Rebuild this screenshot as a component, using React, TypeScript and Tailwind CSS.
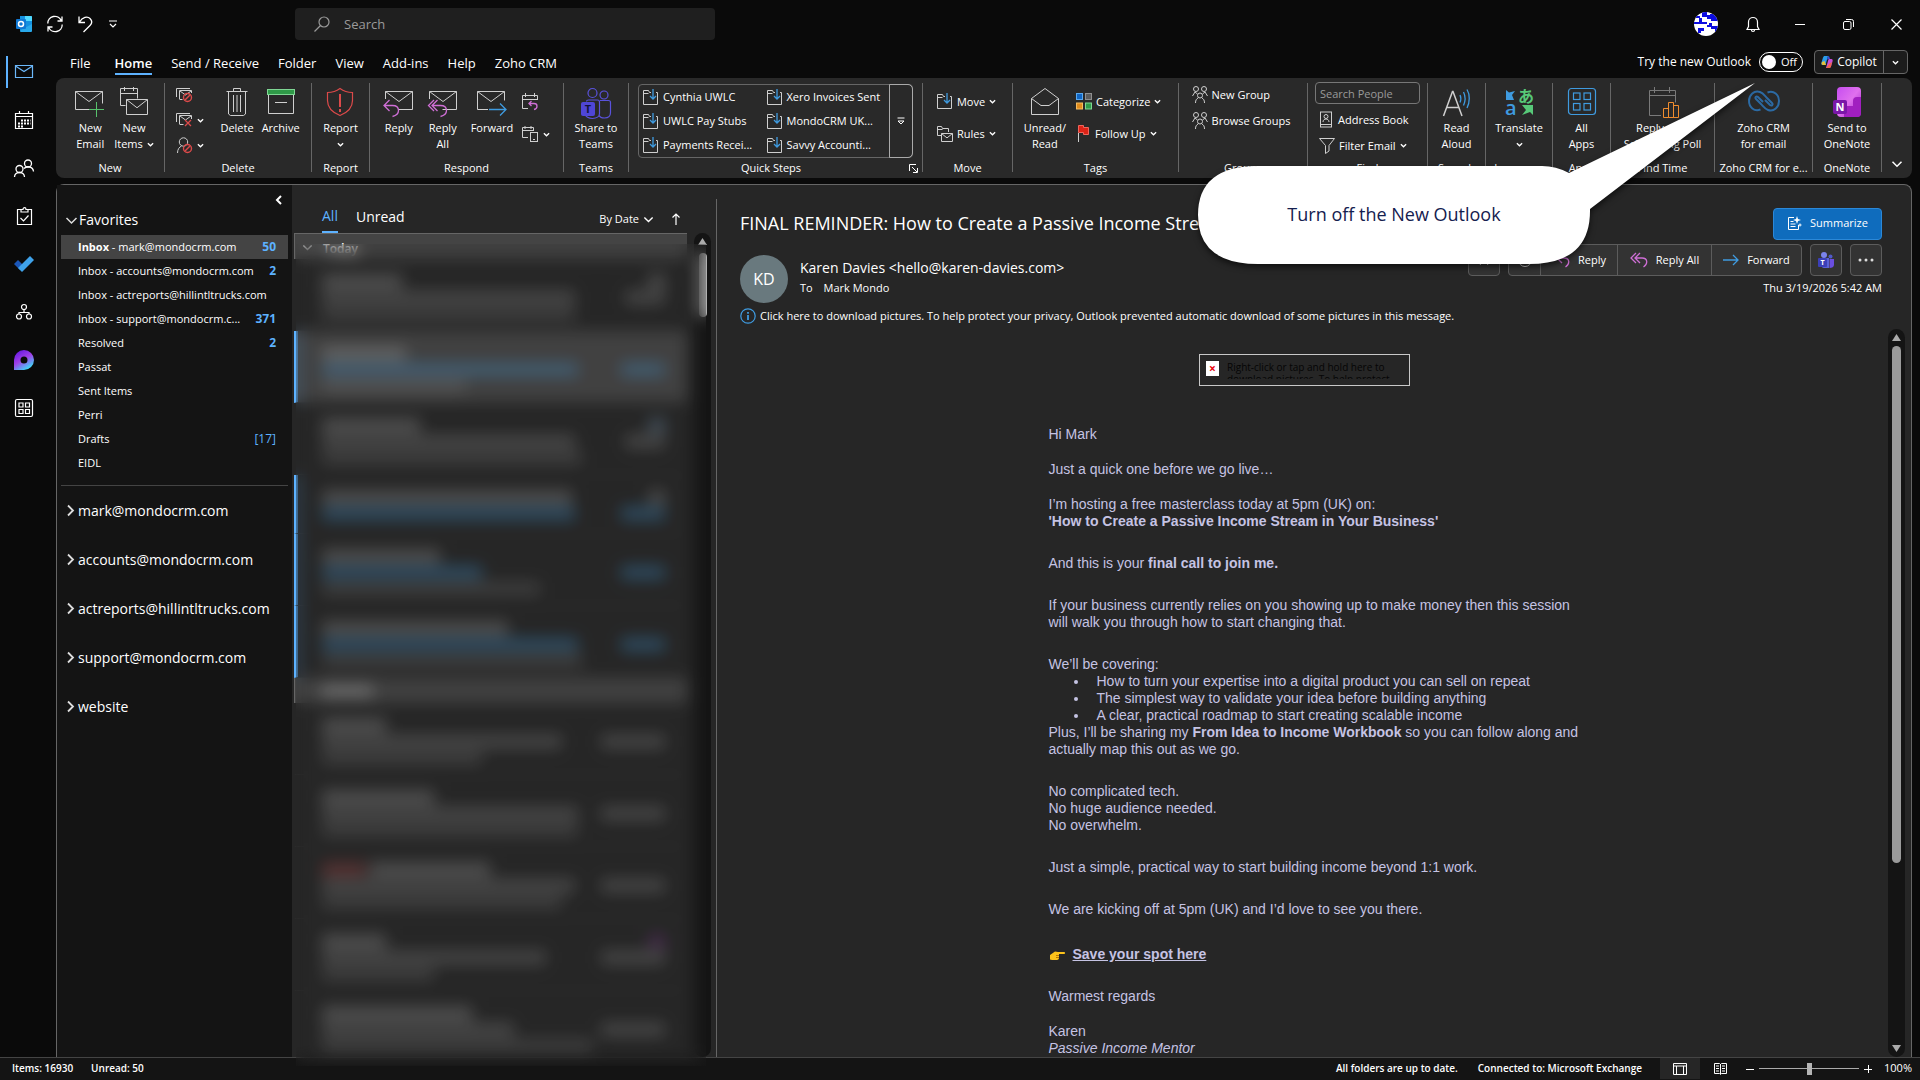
import type { ReactNode } from 'react'

/* ─── Shared icon helpers ────────────────────────────────────── */
const GREY = '#cfcfcf'
const PINK = '#cf6fd6'
const BLUE = '#3f9be0'
const RED = '#dc4a4a'

type SvgProps = { w: number; h: number; children: ReactNode; stroke?: string; sw?: number }

function Svg({ w, h, children, stroke = GREY, sw = 1 }: SvgProps) {
  return (
    <svg
      width={w}
      height={h}
      viewBox={`0 0 ${w} ${h}`}
      fill="none"
      stroke={stroke}
      strokeWidth={sw}
      className="shrink-0 overflow-visible"
      aria-hidden
    >
      {children}
    </svg>
  )
}

function Chevron({ size = 7 }: { size?: number }) {
  return (
    <svg width={size} height={size} viewBox="0 0 8 8" fill="none" stroke="#fff" strokeWidth={size > 8 ? 1 : 1.5} className="shrink-0" aria-hidden>
      <path d="M1 2.500l3 3 3-3" />
    </svg>
  )
}

/* ─── Title bar icons ────────────────────────────────────────── */
function OutlookLogo() {
  return (
    <Svg w={16} h={16} stroke="none">
      <path d="M4 0h11a1 1 0 0 1 1 1v14H4z" fill="#1490df" />
      <path d="M9 0h6a1 1 0 0 1 1 1v4H9z" fill="#50d9ff" />
      <path d="M4 5h6v6H4z" fill="#0364b8" />
      <path d="M16 8v7a1 1 0 0 1-1 1H4l1-2z" fill="#28a8ea" />
      <rect x="0" y="3" width="10" height="10" rx="1" fill="#0f78d4" />
      <circle cx="5" cy="8" r="2.5" stroke="#fff" strokeWidth="1.5" />
    </Svg>
  )
}

function SyncIcon() {
  return (
    <Svg w={16} h={16} stroke="#fff" sw={1.300}>
      <path d="M.8 7.500a7 7 0 0 1 13.400-3M15 .5v4.500h-4.500M15.200 8.500a7 7 0 0 1-13.400 3M1 15.500V11h4.500" />
    </Svg>
  )
}

function UndoIcon() {
  return (
    <Svg w={16} h={16} stroke="#fff" sw={1.300}>
      <path d="M1 .5v6h6M1.500 6C4.500 1 9.500 0 12 2.500c2.500 2.500 2 5 0 7L5.500 16" />
    </Svg>
  )
}

function UserBadge() {
  return (
    <Svg w={24} h={24} stroke="none">
      <defs>
        <clipPath id="badge">
          <circle cx="12" cy="12" r="12" />
        </clipPath>
      </defs>
      <g clipPath="url(#badge)">
        <rect width="24" height="24" fill="#fff" />
        <path
          d="M8 0h5v3h3V2h8v7h-7V7h-4V5H8zM2 4h4v2H2zM0 10h13v2H0zM5 6h3v4H5zM15 11h3v3h6v7h-3v-4h-4v-2h-4v-2h2zM4 16h6v3H7v2H4z"
          fill="#0b0be0"
        />
      </g>
    </Svg>
  )
}

/* ─── Ribbon icons ───────────────────────────────────────────── */
const Envelope = ({ x = 0, y = 0, w = 27, h = 18 }: { x?: number; y?: number; w?: number; h?: number }) => (
  <path d={`M${x + 0.5} ${y + 0.5}h${w}v${h}h-${w}zM${x + 0.5} ${y + 0.5}l${w / 2} ${h * 0.55}l${w / 2}-${h * 0.55}`} />
)

function NewEmailIcon() {
  return (
    <Svg w={32} h={32}>
      <path d="M15 22.500H1.500v-18h27v12M1.500 4.500L15 14.500l13.500-10" />
      <path d="M15 22.500h15M22.500 15v15" stroke="#57c26c" sw={1} />
    </Svg>
  )
}

function NewItemsIcon() {
  return (
    <Svg w={32} h={32}>
      <path d="M7.500 18.500h-5v-17h17v10M2.500 6.500h17M6.500 0v4M15.500 0v4" />
      <Envelope x={8} y={12} w={21} h={15} />
    </Svg>
  )
}

const NoSign = () => (
  <>
    <circle cx="11.500" cy="10.500" r="4" stroke={RED} strokeWidth="1.400" />
    <path d="M9 13l5-5" stroke={RED} strokeWidth="1.400" />
  </>
)

function IgnoreIcon() {
  return (
    <Svg w={17} h={16}>
      <path d="M.5 10V1.500H14M3.500 12v-8.500h12V6M3.500 12.500h3M4 4l5.500 4 5.500-4" />
      <NoSign />
    </Svg>
  )
}

function CleanUpIcon() {
  return (
    <Svg w={17} h={16}>
      <path d="M.5 10V1.500H14M3.500 12v-8.500h12V7M3.500 12.500h4M4 4l5.500 4 5.500-4" />
      <path d="M9 8l6 6M15 8l-6 6" stroke={RED} strokeWidth="1.300" />
    </Svg>
  )
}

function JunkIcon() {
  return (
    <Svg w={17} h={17}>
      <circle cx="7.500" cy="5" r="4.200" />
      <path d="M1.500 16c0-4 2-6 4-7" />
      <g transform="translate(0 1)">
        <NoSign />
      </g>
    </Svg>
  )
}

function TrashIcon() {
  return (
    <Svg w={22} h={30}>
      <path d="M.5 4.500h21M7.500 4V1.500h7V4M2.500 5v22l2 1.500h13l2-1.500V5M7.500 8v17M11 8v17M14.500 8v17" />
    </Svg>
  )
}

function ArchiveIcon() {
  return (
    <Svg w={30} h={30}>
      <rect x="1.500" y="2.500" width="27" height="5" fill="#2f9a48" stroke="#7fd694" />
      <path d="M2.500 8v18.500h25V8M9 15.500h12" />
    </Svg>
  )
}

function ReportIcon() {
  return (
    <Svg w={28} h={30} stroke={RED} sw={1.200}>
      <path d="M14 1.500c4 3 8 4 12.500 4v8c0 7-5 12-12.500 15C6.500 25.500 1.500 20.500 1.500 13.500v-8C6 5.500 10 4.500 14 1.500z" />
      <path d="M14 7v13M14 22v3" strokeWidth="2" />
    </Svg>
  )
}

function ReplyIcon({ all = false }: { all?: boolean }) {
  return (
    <Svg w={32} h={32}>
      <path d="M2.500 12V4.500h27v18h-14M2.500 4.500L16 14.500l13.500-10" />
      {all && <path d="M7 13l-5.500 5.500L7 24" stroke={PINK} strokeWidth="1.300" />}
      <g transform={all ? 'translate(4 0)' : undefined}>
        <path d="M6.500 13L1 18.500 6.500 24M1.500 18.500h8c4 0 6 2 6 5 0 3-2 5-6 6" stroke={PINK} strokeWidth="1.300" />
      </g>
    </Svg>
  )
}

function ForwardIcon() {
  return (
    <Svg w={32} h={32}>
      <path d="M12 22.500H1.500v-18h27v9M1.500 4.500L15 14.500l13.500-10" />
      <path d="M13 22.500h17M24 16.500l6 6-6 6" stroke={BLUE} strokeWidth="1.300" />
    </Svg>
  )
}

function MeetingIcon() {
  return (
    <Svg w={18} h={18}>
      <path d="M7 15.500H1.500v-13h15V7M1.500 6.500h15M4.500 0v4M13.500 0v4" />
      <path d="M10.500 8L8 10.500l2.500 2.500M8 10.500h5c4 0 4 5 0 6" stroke={PINK} strokeWidth="1.300" />
    </Svg>
  )
}

function MoreRespondIcon() {
  return (
    <Svg w={18} h={18}>
      <path d="M7 12.500H1.500v-10h11V6M1.500 5.500h11M4 1v3M10 1v3" />
      <rect x="9.500" y="7.500" width="7" height="9" />
      <path d="M12 14.500h2" />
    </Svg>
  )
}

function TeamsShareIcon() {
  return (
    <Svg w={32} h={32} stroke="#5a52dc" sw={1.200}>
      <circle cx="12.500" cy="6" r="4.500" />
      <circle cx="24" cy="8" r="4" />
      <path d="M6.500 14.500c0-1 1-1.500 2-1.500h9c1.500 0 2 1 2 2v11.500c0 3-3 5-7 5s-7-2-7-4M20 13.500h8.500a2 2 0 0 1 2 2v10c0 4-3 5.500-6 5.500-3 0-5-1-5.500-3" />
      <rect x="1" y="15" width="14" height="14" rx="2" fill="#4f46d8" stroke="none" />
      <text x="8" y="26" fontSize="11" fontWeight="700" fill="#12123c" stroke="none" textAnchor="middle" fontFamily="Open Sans">
        T
      </text>
    </Svg>
  )
}

function FolderMoveIcon() {
  return (
    <Svg w={16} h={17}>
      <path d="M8 3.500H6.500l-1-2h-5v14h14v-12H13M.5 4.500h5" />
      <path d="M10 0v10M7 7l3 3 3-3" stroke={BLUE} strokeWidth="1.300" />
    </Svg>
  )
}

function RulesIcon() {
  return (
    <Svg w={16} h={17}>
      <path d="M4 10.500H.5v-9h4l1 2h6V7M.5 4.500h5" />
      <Envelope x={4} y={8} w={11} h={8} />
    </Svg>
  )
}

function UnreadIcon() {
  return (
    <Svg w={30} h={30}>
      <path d="M1.500 11.500L15 1.500l13.500 10v16h-27zM1.500 11.500L11 18.500h8l9.500-7" />
    </Svg>
  )
}

function CategorizeIcon() {
  return (
    <Svg w={16} h={17}>
      <rect x=".5" y=".5" width="6" height="6" fill="#1166c4" stroke="#5aa9ef" />
      <rect x="9.500" y=".5" width="6" height="6" fill="#5c5c5c" stroke="#8f8f8f" />
      <rect x=".5" y="10" width="6" height="6" fill="#e18b1b" stroke="#f4bd62" />
      <rect x="9.500" y="10" width="6" height="6" fill="#2f9a48" stroke="#7fd694" />
    </Svg>
  )
}

function FlagIcon() {
  return (
    <Svg w={15} h={17}>
      <path d="M2.500 8v9" />
      <path d="M2.500 .5h5v2h5v7h-5v-2h-5z" fill="#dc2317" stroke="#f0655c" />
    </Svg>
  )
}

function GroupIcon() {
  return (
    <Svg w={16} h={18}>
      <circle cx="4" cy="3" r="2.500" />
      <circle cx="12" cy="3" r="2.500" />
      <circle cx="8" cy="9.500" r="2.500" />
      <path d="M.5 10L3 6l2.500 2M15.500 10L13 6l-2.500 2M3.500 17c0-3 1-4 2.500-5M12.500 17c0-3-1-4-2.500-5" />
    </Svg>
  )
}

function AddressIcon() {
  return (
    <Svg w={15} h={17}>
      <rect x="1.500" y="1" width="11" height="15" />
      <circle cx="7" cy="5.500" r="2" />
      <path d="M4 11c0-4 6-4 6 0M1.500 13.500h11" />
    </Svg>
  )
}

function FilterIcon() {
  return (
    <Svg w={16} h={17}>
      <path d="M.5 1.500h15L10 8.500V14l-3.500 2.500v-8z" />
    </Svg>
  )
}

function ReadAloudIcon() {
  return (
    <Svg w={30} h={32}>
      <path d="M1.500 29L10.500 4.500h.500L20 29M5 20.500h11.500" strokeWidth="1.500" />
      <path d="M18 8c1 2 1 5 0 7.500M21.500 5c2 4 2 9 0 13.500M25 2.500c3 5 3 12.500 0 18.500" stroke={BLUE} strokeWidth="1.300" />
    </Svg>
  )
}

function TranslateIcon() {
  return (
    <Svg w={32} h={32} stroke="none">
      <text x="15" y="15" fontSize="16" fontWeight="700" fill="#57c878" fontFamily="Noto Sans CJK JP">
        あ
      </text>
      <text x="2" y="28" fontSize="20" fontWeight="600" fill={BLUE} fontFamily="Open Sans">
        a
      </text>
      <path d="M3 3l3 2.500L12 4l-3 4 2 5H3z" fill={BLUE} />
      <path d="M19 18h11v10l-3-3-8 3 4-5z" fill="#57c878" />
    </Svg>
  )
}

function AllAppsIcon() {
  return (
    <Svg w={30} h={30} stroke={BLUE} sw={1.200}>
      <rect x="1.500" y="1.500" width="27" height="26" rx="3" />
      <rect x="6.500" y="6" width="6.500" height="6.500" />
      <rect x="17" y="6" width="6.500" height="6.500" />
      <rect x="6.500" y="16.500" width="6.500" height="6.500" />
      <rect x="17" y="16.500" width="6.500" height="6.500" />
    </Svg>
  )
}

function PollIcon() {
  return (
    <Svg w={32} h={32} stroke="#7a7a7a">
      <path d="M14 28.500H2.500V3.500h26v12M2.500 8.500h26M7.500 0v6M22.500 0v6" />
      <path d="M16.500 30.500v-9h5v9zM21.500 30.500v-15h5v15zM26.500 30.500v-12h5v12z" stroke="#f08c2e" />
    </Svg>
  )
}

function ZohoIcon() {
  return (
    <Svg w={32} h={24} stroke="#2c6aa3" sw={2}>
      <path d="M12.500 20.500C6 23 1 18 1 12s5-11 11-9c3 1 5 4 7 6l5 5c1.500 1.500 0 3.500-2 2l-5-5" />
      <path d="M19.500 3.500C26 1 31 6 31 12s-5 11-11 9c-3-1-5-4-7-6l-5-5c-1.500-1.500 0-3.500 2-2l5 5" />
    </Svg>
  )
}

function OneNoteIcon() {
  return (
    <Svg w={30} h={32} stroke="none">
      <defs>
        <linearGradient id="one" x1="0" y1="0" x2="1" y2="1">
          <stop offset="0" stopColor="#c64df0" />
          <stop offset=".5" stopColor="#e070ee" />
          <stop offset="1" stopColor="#9a1fc4" />
        </linearGradient>
      </defs>
      <rect x="5" y="0" width="24" height="30" rx="4" fill="url(#one)" />
      <path d="M29 10v16a4 4 0 0 1-4 4H12V19h9v-5a4 4 0 0 1 4-4z" fill="#a11fc0" />
      <rect x="1" y="13" width="14" height="14" rx="2" fill="#7a17a8" />
      <text x="8" y="24" fontSize="11" fontWeight="700" fill="#fff" textAnchor="middle" fontFamily="Open Sans">
        N
      </text>
    </Svg>
  )
}

function CopilotIcon() {
  return (
    <Svg w={12} h={12} stroke="none">
      <path d="M3 0h4L5 7c-.5 2-1 2-2 2H1.500C.5 9 0 8 .5 6.500L2 1.500z" fill="#2a9bea" />
      <path d="M1 6l2.500-1L5 9H2C.5 9 .3 8 1 6z" fill="#e8c23a" />
      <path d="M7 0c1.200 0 1.500 1 2 3l-3 .5z" fill="#3552d8" />
      <path d="M9 12H5l2-7c.5-2 1-2 2-2h1.500c1 0 1.500 1 1 2.500L10 10.500z" fill="#c84fd8" />
      <path d="M11 6l-3 2-3 4h4l1-1.500z" fill="#f0654e" />
    </Svg>
  )
}

function TeamsSmallIcon() {
  return (
    <Svg w={16} h={17} stroke="none">
      <circle cx="6" cy="3" r="3" fill="#7b83eb" />
      <circle cx="12.500" cy="4.500" r="2" fill="#5059c9" />
      <path d="M3 6h8v10H6c-2 0-3-2-3-4z" fill="#5b62d8" />
      <path d="M11.500 7H16v6c0 2-2 3-4.500 3z" fill="#6a4ee0" />
      <rect y="6" width="9" height="9" rx="1" fill="#3b3fb8" />
      <text x="4.500" y="13" fontSize="7" fontWeight="700" fill="#fff" textAnchor="middle" fontFamily="Open Sans">
        T
      </text>
    </Svg>
  )
}

function ReplyArrow({ all = false }: { all?: boolean }) {
  return (
    <Svg w={18} h={16} stroke={PINK} sw={1.300}>
      {all && <path d="M6 1L1 6l5 5" />}
      <path d="M10 1L5 6l5 5M5.500 6H12c6 0 6 6 1.500 9" />
    </Svg>
  )
}

/* ─── Ribbon building blocks ─────────────────────────────────── */
function Group({ label, width, children }: { label: ReactNode; width: string; children: ReactNode }) {
  return (
    <section className={`flex shrink-0 flex-col border-r border-[#666] ${width}`}>
      <div className="flex min-h-0 flex-1 justify-center pt-1">{children}</div>
      <div className="-mb-1 shrink-0 px-1 text-center text-[11px] leading-4 whitespace-nowrap">{label}</div>
    </section>
  )
}

function BigButton({ icon, lines, arrow }: { icon: ReactNode; lines: string[]; arrow?: boolean }) {
  return (
    <button type="button" className="flex flex-col items-center self-start whitespace-nowrap text-[11px] leading-4">
      <span className="mb-px flex h-8 items-start justify-center">{icon}</span>
      {lines.map((line, i) => (
        <span key={line} className="flex items-center gap-1">
          {line}
          {arrow && i === lines.length - 1 && lines.length > 1 && <Chevron />}
        </span>
      ))}
      {arrow && lines.length === 1 && <span className="flex h-4 items-center"><Chevron /></span>}
    </button>
  )
}

function SmallButton({ icon, label, arrow }: { icon: ReactNode; label?: string; arrow?: boolean }) {
  return (
    <button type="button" aria-label={label ? undefined : 'More'} className="flex items-center gap-1 whitespace-nowrap text-[11px] leading-4">
      {icon}
      {label && <span>{label}</span>}
      {arrow && <Chevron />}
    </button>
  )
}

const QUICK_STEPS = ['Cynthia UWLC', 'Xero Invoices Sent', 'UWLC Pay Stubs', 'MondoCRM UK...', 'Payments Recei...', 'Savvy Accounti...']

function Ribbon() {
  return (
    <div className="flex h-[100px] rounded-lg bg-[#292929] pt-[5px] pb-[6px]">
      <Group label="New" width="w-[109px]">
        <div className="flex gap-2 pl-2">
          <BigButton icon={<NewEmailIcon />} lines={['New', 'Email']} />
          <BigButton icon={<NewItemsIcon />} lines={['New', 'Items']} arrow />
        </div>
      </Group>
      <Group label="Delete" width="w-[147px]">
        <div className="flex gap-2">
          <div className="mr-1 flex w-8 flex-col gap-[9px]">
            <SmallButton icon={<IgnoreIcon />} />
            <SmallButton icon={<CleanUpIcon />} arrow />
            <SmallButton icon={<JunkIcon />} arrow />
          </div>
          <BigButton icon={<TrashIcon />} lines={['Delete']} />
          <BigButton icon={<ArchiveIcon />} lines={['Archive']} />
        </div>
      </Group>
      <Group label="Report" width="w-[58px]">
        <BigButton icon={<ReportIcon />} lines={['Report']} arrow />
      </Group>
      <Group label="Respond" width="w-[194px]">
        <div className="flex gap-3">
          <BigButton icon={<ReplyIcon />} lines={['Reply']} />
          <BigButton icon={<ReplyIcon all />} lines={['Reply', 'All']} />
          <BigButton icon={<ForwardIcon />} lines={['Forward']} />
          <div className="-ml-1 flex flex-col gap-[14px] pt-[6px]">
            <SmallButton icon={<MeetingIcon />} />
            <SmallButton icon={<MoreRespondIcon />} arrow />
          </div>
        </div>
      </Group>
      <Group label="Teams" width="w-[65px]">
        <BigButton icon={<TeamsShareIcon />} lines={['Share to', 'Teams']} />
      </Group>
      <Group
        width="w-[294px]"
        label={
          <span className="flex items-center">
            <span className="flex-1">Quick Steps</span>
            <Svg w={9} h={9} stroke="#fff">
              <path d="M.5 7V.5H7M3 3l5 5M8.500 4v4.500H4" />
            </Svg>
          </span>
        }
      >
        <div className="-mt-[3px] flex h-[74px] w-[275px] self-start rounded border border-[#666]">
          <div className="grid flex-1 grid-cols-2 items-center pl-1">
            {QUICK_STEPS.map(step => (
              <SmallButton key={step} icon={<FolderMoveIcon />} label={step} />
            ))}
          </div>
          <button type="button" aria-label="More quick steps" className="flex w-[22px] items-center justify-center rounded-r outline outline-[#aaa]">
            <Svg w={8} h={8} stroke="#fff">
              <path d="M.5 1h7M1 4l3 3 3-3z" />
            </Svg>
          </button>
        </div>
      </Group>
      <Group label="Move" width="w-[90px]">
        <div className="flex flex-col gap-[15px] pt-[6px] pr-[2px]">
          <SmallButton icon={<FolderMoveIcon />} label="Move" arrow />
          <SmallButton icon={<RulesIcon />} label="Rules" arrow />
        </div>
      </Group>
      <Group label="Tags" width="w-[166px]">
        <div className="flex gap-[10px] pr-[6px]">
          <BigButton icon={<UnreadIcon />} lines={['Unread/', 'Read']} />
          <div className="flex flex-col gap-[15px] pt-[6px]">
            <SmallButton icon={<CategorizeIcon />} label="Categorize" arrow />
            <SmallButton icon={<FlagIcon />} label="Follow Up" arrow />
          </div>
        </div>
      </Group>
      <Group label="Groups" width="w-[129px]">
        <div className="-mt-px flex flex-col gap-2 pr-1">
          <SmallButton icon={<GroupIcon />} label="New Group" />
          <SmallButton icon={<GroupIcon />} label="Browse Groups" />
        </div>
      </Group>
      <Group label="Find" width="w-[120px]">
        <div className="flex w-[105px] flex-col gap-[7px]">
          <input
            aria-label="Search People"
            placeholder="Search People"
            className="-mt-[5px] h-[22px] w-full rounded-sm border border-[#777] bg-transparent px-1 text-[11px] outline-none placeholder:text-[#9a9a9a]"
          />
          <div className="flex flex-col gap-[9px] pl-1">
            <SmallButton icon={<AddressIcon />} label="Address Book" />
            <SmallButton icon={<FilterIcon />} label="Filter Email" arrow />
          </div>
        </div>
      </Group>
      <Group label="Speech" width="w-[58px]">
        <BigButton icon={<ReadAloudIcon />} lines={['Read', 'Aloud']} />
      </Group>
      <Group label="Language" width="w-[67px]">
        <BigButton icon={<TranslateIcon />} lines={['Translate']} arrow />
      </Group>
      <Group label="Apps" width="w-[58px]">
        <BigButton icon={<AllAppsIcon />} lines={['All', 'Apps']} />
      </Group>
      <Group label="Find Time" width="w-[104px]">
        <BigButton icon={<PollIcon />} lines={['Reply with', 'Scheduling Poll']} />
      </Group>
      <Group label="Zoho CRM for e..." width="w-[98px]">
        <BigButton icon={<span className="pt-[2px]"><ZohoIcon /></span>} lines={['Zoho CRM', 'for email']} />
      </Group>
      <Group label="OneNote" width="w-[69px]">
        <BigButton icon={<OneNoteIcon />} lines={['Send to', 'OneNote']} />
      </Group>
      <button type="button" aria-label="Collapse ribbon" className="flex flex-1 items-end justify-center pb-[2px]">
        <Chevron size={12} />
      </button>
    </div>
  )
}

/* ─── Title bar and tabs ─────────────────────────────────────── */
function TitleBar() {
  return (
    <header className="flex h-12 shrink-0 items-center pl-4">
      <div className="flex w-[279px] items-center gap-[15px]">
        <OutlookLogo />
        <SyncIcon />
        <UndoIcon />
        <Svg w={8} h={8} stroke="#fff" sw={1.200}>
          <path d="M0 1h8M1 4l3 3 3-3" />
        </Svg>
      </div>
      <label className="flex h-8 w-[420px] items-center gap-[14px] rounded bg-[#1f1f1f] px-[19px]">
        <Svg w={16} h={16} stroke="#999" sw={1.200}>
          <circle cx="10" cy="6" r="5" />
          <path d="M6.500 9.500L.5 15.500" />
        </Svg>
        <input placeholder="Search" aria-label="Search" className="mt-px flex-1 bg-transparent text-[13px] outline-none placeholder:text-[#9a9a9a]" />
      </label>
      <div className="ml-auto flex items-center">
        <UserBadge />
        <button type="button" aria-label="Notifications" className="flex w-[70px] justify-center">
          <Svg w={14} h={17} stroke="#fff" sw={1.200}>
            <path d="M1 13.500h12l-1.500-3V6c0-6-9-6-9 0v4.500zM5.500 14c0 2 3 2 3 0" />
          </Svg>
        </button>
        <button type="button" aria-label="Minimize" className="flex w-6 justify-center">
          <Svg w={10} h={10} stroke="#fff"><path d="M0 5.500h10" /></Svg>
        </button>
        <button type="button" aria-label="Restore" className="flex w-[72px] justify-center">
          <Svg w={11} h={11} stroke="#fff">
            <rect x=".5" y="2.500" width="7.500" height="8" rx="1.500" />
            <path d="M3 .5h5.500a2 2 0 0 1 2 2V8" />
          </Svg>
        </button>
        <button type="button" aria-label="Close" className="mr-3 flex w-6 justify-center">
          <Svg w={11} h={11} stroke="#fff" sw={1.200}><path d="M.5 .5l10 10M10.500 .5l-10 10" /></Svg>
        </button>
      </div>
    </header>
  )
}

const TABS = ['File', 'Home', 'Send / Receive', 'Folder', 'View', 'Add-ins', 'Help', 'Zoho CRM']

function TabBar() {
  return (
    <div className="flex h-[30px] items-start pl-[14px] text-xs leading-8">
      <nav className="flex gap-[19px] text-[13px] leading-[30px]">
        {TABS.map(tab =>
          tab === 'Home' ? (
            <a key={tab} href="#home" className="ml-[5px] h-[27px] border-b-2 border-[#5db2ff] font-semibold">
              {tab}
            </a>
          ) : (
            <a key={tab} href="#tab">{tab}</a>
          ),
        )}
      </nav>
      <div className="ml-auto flex items-center gap-2">
        <label htmlFor="new-outlook" className="leading-7">Try the new Outlook</label>
        <span className="relative flex items-center">
          <input
            id="new-outlook"
            type="checkbox"
            role="switch"
            className="h-5 w-11 appearance-none rounded-full border border-white before:m-[2px] before:block before:size-[14px] before:rounded-full before:bg-white"
          />
          <span className="pointer-events-none absolute right-[6px] text-[11px] leading-4">Off</span>
        </span>
        <div className="ml-[3px] mr-1 flex h-6 items-center rounded-sm border border-[#666] bg-[#1c1c1c] leading-5">
          <button type="button" className="flex h-full w-[69px] items-center justify-center gap-1 border-r border-[#666]">
            <CopilotIcon />
            Copilot
          </button>
          <button type="button" aria-label="Copilot options" className="flex w-[23px] justify-center"><Chevron /></button>
        </div>
      </div>
    </div>
  )
}

/* ─── Left app rail ──────────────────────────────────────────── */
const RAIL: { name: string; icon: ReactNode }[] = [
  {
    name: 'Mail',
    icon: <Svg w={18} h={14} stroke="#6cb8fa" sw={1.200}><path d="M.5 .5h17v12H.5zM.5 1L9 6.500 17.500 1" /></Svg>,
  },
  {
    name: 'Calendar',
    icon: (
      <Svg w={18} h={18} stroke="#fff" sw={1.200}>
        <path d="M.5 2.500h17v15H.5zM.5 5.500h17M4.500 0v3M13.500 0v3" />
        <path d="M6 9.500h9.500M3 12.500h12.500M3 15.500h6" strokeWidth="2" strokeDasharray="2 1" />
      </Svg>
    ),
  },
  {
    name: 'People',
    icon: (
      <Svg w={20} h={19} stroke="#fff" sw={1.300}>
        <circle cx="5.500" cy="10" r="3.500" />
        <path d="M.5 18c0-6 10-6 10 0" />
        <circle cx="14" cy="4.500" r="3.500" />
        <path d="M10 9.500c3-3 9-2 9.500 3" />
      </Svg>
    ),
  },
  {
    name: 'Tasks',
    icon: (
      <Svg w={15} h={18} stroke="#fff" sw={1.200}>
        <path d="M4 2.500H.5v15h14v-15H11M4 5V2.500h2c0-2.500 3-2.500 3 0h2V5zM3.500 11l3 3 5-5.500" />
      </Svg>
    ),
  },
  {
    name: 'To Do',
    icon: (
      <Svg w={20} h={16} stroke="none">
        <path d="M0 8l4-4 6 6-4 4z" fill="#1a56b8" />
        <path d="M4 12L16 0l4 4L8 16z" fill="#3fa2ea" />
      </Svg>
    ),
  },
  {
    name: 'Org',
    icon: (
      <Svg w={16} h={16} stroke="#fff" sw={1.200}>
        <circle cx="8" cy="3" r="2.500" />
        <circle cx="3" cy="12.500" r="2.500" />
        <circle cx="13" cy="12.500" r="2.500" />
        <path d="M8 5.500v3M3 10V8.500h10V10" />
      </Svg>
    ),
  },
  {
    name: 'Loop',
    icon: (
      <Svg w={20} h={20} stroke="none">
        <defs>
          <linearGradient id="loop" x1="0" y1="0" x2=".6" y2="1">
            <stop offset="0" stopColor="#5a10e0" />
            <stop offset=".55" stopColor="#a040e8" />
            <stop offset="1" stopColor="#40d8f8" />
          </linearGradient>
        </defs>
        <path d="M0 20V10a10 10 0 1 1 10 10zM10 6.500a3.500 3.500 0 1 0 0 7 3.500 3.500 0 0 0 0-7z" fill="url(#loop)" fillRule="evenodd" />
      </Svg>
    ),
  },
  {
    name: 'Apps',
    icon: (
      <Svg w={18} h={18} stroke="#fff" sw={1.200}>
        <rect x=".5" y=".5" width="17" height="17" rx="1.500" />
        <path d="M4 4h4v4H4zM10.500 4h4v4h-4zM4 10.500h4v4H4zM10.500 10.500h4v4h-4z" />
      </Svg>
    ),
  },
]

function Rail() {
  return (
    <nav className="flex w-14 shrink-0 flex-col">
      {RAIL.map(({ name, icon }, i) => (
        <button key={name} type="button" aria-label={name} className="flex h-12 items-center">
          <span className={i === 0 ? 'ml-[6px] h-8 w-[2px] bg-[#5db2ff]' : 'ml-[6px] h-8 w-[2px]'} />
          <span className="flex w-8 justify-center">{icon}</span>
        </button>
      ))}
    </nav>
  )
}

/* ─── Folder pane ────────────────────────────────────────────── */
const FAVORITES = [
  { name: 'Inbox', mail: 'mark@mondocrm.com', count: '50', active: true },
  { name: 'Inbox', mail: 'accounts@mondocrm.com', count: '2' },
  { name: 'Inbox', mail: 'actreports@hillintltrucks.com' },
  { name: 'Inbox', mail: 'support@mondocrm.c...', count: '371' },
  { name: 'Resolved', count: '2' },
  { name: 'Passat' },
  { name: 'Sent Items' },
  { name: 'Perri' },
  { name: 'Drafts', count: '[17]', plain: true },
  { name: 'EIDL' },
]

const ACCOUNTS = ['mark@mondocrm.com', 'accounts@mondocrm.com', 'actreports@hillintltrucks.com', 'support@mondocrm.com', 'website']

function FolderPane() {
  return (
    <aside className="w-[235px] shrink-0 bg-[#141414] px-1">
      <div className="flex h-[25px] items-end justify-end pr-[6px] pb-[5px]">
        <Svg w={7} h={10} stroke="#fff" sw={2}><path d="M6 1L2 5l4 4" /></Svg>
      </div>
      <button type="button" className="flex h-[25px] items-start gap-[2px] pl-[5px] text-sm leading-[20px]">
        <span className="flex h-5 items-center">
          <Svg w={11} h={8} stroke="#ddd" sw={1.500}><path d="M.5 2l5 5 5-5" /></Svg>
        </span>
        <span>Favorites</span>
      </button>
      <ul>
        {FAVORITES.map(f => (
          <li
            key={f.name + (f.mail ?? '')}
            className={`flex h-6 items-center pr-3 pl-[17px] text-[11px] whitespace-nowrap ${f.active ? 'bg-[#444]' : ''}`}
          >
            <span className={f.active ? 'font-bold' : ''}>{f.name}</span>
            {f.mail && <span>&nbsp;- {f.mail}</span>}
            {f.count && <span className={`ml-auto text-xs text-[#5db2ff] ${f.plain ? '' : 'font-bold'}`}>{f.count}</span>}
          </li>
        ))}
      </ul>
      <hr className="mt-[10px] border-[#444]" />
      <ul>
        {ACCOUNTS.map(a => (
          <li key={a} className="flex h-[49px] items-center gap-1 pl-[6px] text-sm whitespace-nowrap">
            <Svg w={7} h={11} stroke="#ddd" sw={1.800}><path d="M1 .5l5 5-5 5" /></Svg>
            {a}
          </li>
        ))}
      </ul>
    </aside>
  )
}

/* ─── Message list (contents are obscured) ───────────────────── */
type Row = { name: string; subject: string; preview?: string; date: string; unread?: boolean; selected?: boolean; tag?: boolean; mark?: string }

const TODAY: Row[] = [
  { name: 'w-20', subject: 'w-[253px]', preview: 'w-[253px]', date: 'w-10', mark: 'bg-[#555]' },
  { name: 'w-[84px]', subject: 'w-[256px]', preview: 'w-36', date: 'w-11', unread: true, selected: true },
  { name: 'w-[98px]', subject: 'w-[253px]', preview: 'w-[260px]', date: 'w-10', mark: 'bg-[#4a5a68]' },
  { name: 'w-[250px]', subject: 'w-[253px]', date: 'w-11', unread: true, mark: 'bg-[#555]' },
  { name: 'w-[118px]', subject: 'w-40', preview: 'w-[218px]', date: 'w-11', unread: true },
  { name: 'w-[186px]', subject: 'w-[256px]', preview: 'w-[260px]', date: 'w-11', unread: true },
]

const YESTERDAY: Row[] = [
  { name: 'w-16', subject: 'w-60', preview: 'w-40', date: 'w-16' },
  { name: 'w-28', subject: 'w-[256px]', preview: 'w-[256px]', date: 'w-16' },
  { name: 'w-[120px]', subject: 'w-[253px]', preview: 'w-60', date: 'w-16', tag: true },
  { name: 'w-16', subject: 'w-56', preview: 'w-28', date: 'w-16', mark: 'bg-[#4c2d54]' },
  { name: 'w-[150px]', subject: 'w-48', preview: 'w-[270px]', date: 'w-16' },
]

function MessageRow({ row }: { row: Row }) {
  const line = row.unread ? (row.selected ? 'bg-[#46657d]' : 'bg-[#30526b]') : 'bg-[#4c4c4c]'
  return (
    <li
      className={`flex shrink-0 border-b border-b-[#333] border-l-4 pt-[14px] pl-6 ${row.preview ? 'h-[72px]' : 'h-[59px]'} ${
        row.unread ? 'border-l-[#5db2ff]' : 'border-l-transparent'
      } ${row.selected ? 'bg-[#444]' : ''}`}
    >
      <div className="flex w-[270px] flex-col gap-[3px] pt-[2px]">
        <div className="flex gap-1">
          {row.tag && <span className="h-[13px] w-11 bg-[#613434]" />}
          <span className={`h-[13px] ${row.selected ? 'bg-[#6c6c6c]' : 'bg-[#585858]'} ${row.name}`} />
        </div>
        <span className={`h-[13px] ${line} ${row.subject}`} />
        {row.preview && <span className={`h-[13px] ${row.selected ? 'bg-[#585858]' : 'bg-[#424242]'} ${row.preview}`} />}
      </div>
      <div className="flex flex-1 flex-col items-end gap-[3px] pt-[2px] pr-[22px]">
        <span className={`h-[13px] w-4 ${row.mark ?? ''}`} />
        <span className={`h-[13px] ${line} ${row.date}`} />
      </div>
    </li>
  )
}

function MessageList() {
  return (
    <section className="relative flex w-[424px] shrink-0 flex-col pl-[2px]">
      <div className="flex h-12 items-end pr-9 pl-7">
        <div className="flex gap-[18px] text-sm leading-[31px]">
          <button type="button" className="border-b-2 border-[#5db2ff] text-[#5db2ff]">All</button>
          <button type="button">Unread</button>
        </div>
        <div className="ml-auto flex items-center gap-[18px] text-[11px] leading-7">
          <button type="button" className="flex items-center gap-1">By Date <Chevron size={11} /></button>
          <button type="button" aria-label="Sort ascending">
            <Svg w={8} h={12} stroke="#fff" sw={1.200}><path d="M4 12V1M.5 4.500L4 1l3.500 3.500" /></Svg>
          </button>
        </div>
      </div>
      <div className="flex min-h-0 flex-1 gap-[7px]">
        <div className="flex w-[393px] flex-col overflow-hidden">
          <div className="flex h-[26px] shrink-0 items-start gap-[10px] border-t border-l border-[#666] bg-[#444] pl-[7px] text-xs leading-[30px] font-semibold">
            <span className="flex h-[26px] items-center"><Chevron size={11} /></span>
            Today
          </div>
          <ul className="flex shrink-0 flex-col">{TODAY.map((row, i) => <MessageRow key={i} row={row} />)}</ul>
          <div className="flex h-[25px] shrink-0 items-center border-l border-[#666] bg-[#444] pl-[26px]">
            <span className="h-3 w-[52px] bg-[#777]" />
          </div>
          <ul className="flex shrink-0 flex-col">{YESTERDAY.map((row, i) => <MessageRow key={i} row={row} />)}</ul>
        </div>
        <div className="flex w-[17px] flex-col items-center rounded-full bg-[#141414] pt-[5px]">
          <Svg w={9} h={7} stroke="none"><path d="M4.500 0L9 7H0z" fill="#aaa" /></Svg>
          <div className="mt-2 h-16 w-2 rounded-full bg-[#b0b0b0]" />
        </div>
      </div>
      {/* Privacy veil laid over the messages */}
      <div className="absolute top-[59px] -bottom-[9px] left-[4px] z-10 w-[410px] bg-[#262626]/10 backdrop-blur-[8px]" />
    </section>
  )
}

/* ─── Reading pane ───────────────────────────────────────────── */
const barButton = 'flex items-center justify-center rounded border border-[#5c5c5c] bg-[#333]'

function MailHeader() {
  return (
    <div className="pr-[29px] pl-[23px]">
      <div className="flex h-[33px] items-center justify-between">
        <h1 className="-mt-[2px] text-lg whitespace-nowrap">FINAL REMINDER: How to Create a Passive Income Stream</h1>
        <button type="button" className="flex h-8 w-[109px] items-center justify-center gap-2 rounded border border-[#2b88d8] bg-[#0f6cbd] text-[11px]">
          <Svg w={15} h={15} stroke="#fff">
            <path d="M7 1.500H1.500v12h10V9M3.500 5.500h3M3.500 8h5M3.500 10.500h5" />
            <path d="M10 0l1 3 3 1-3 1-1 3-1-3-3-1 3-1z" fill="#fff" stroke="none" />
            <path d="M13 7.500v3M11.500 9h3" />
          </Svg>
          Summarize
        </button>
      </div>
      <div className="mt-1 flex items-start">
        <div className="mt-[11px] mr-3 flex size-12 shrink-0 items-center justify-center rounded-full bg-[#69797e] text-base">KD</div>
        <div className="mt-3 flex-1">
          <p className="text-sm leading-6">Karen Davies &lt;hello@karen-davies.com&gt;</p>
          <p className="text-[11px] leading-4">
            To <span className="ml-2">Mark Mondo</span>
          </p>
        </div>
        <div className="flex flex-col items-end text-[11px]">
          <div className="flex h-8 gap-2">
            <button type="button" aria-label="Pin" className={`w-8 ${barButton}`}>
              <Svg w={10} h={12}><path d="M1 11l4-6 4 6M3 8h4" /></Svg>
            </button>
            <div className="flex rounded border border-[#5c5c5c] bg-[#333]">
              <button type="button" aria-label="React" className="flex w-8 items-center justify-center border-r border-[#5c5c5c]">
                <Svg w={14} h={14}><circle cx="7" cy="7" r="6.500" /><path d="M4 9c2 2 4 2 6 0" /></Svg>
              </button>
              <button type="button" className="flex w-[77px] items-center justify-center gap-2 border-r border-[#5c5c5c]">
                <ReplyArrow />
                Reply
              </button>
              <button type="button" className="flex w-[94px] items-center justify-center gap-2 border-r border-[#5c5c5c]">
                <ReplyArrow all />
                Reply All
              </button>
              <button type="button" className="flex w-[89px] items-center justify-center gap-2">
                <Svg w={16} h={12} stroke={BLUE} sw={1.300}><path d="M0 6h15M10 1l5 5-5 5" /></Svg>
                Forward
              </button>
            </div>
            <button type="button" aria-label="Share to Teams" className={`w-8 ${barButton}`}><TeamsSmallIcon /></button>
            <button type="button" aria-label="More actions" className={`w-8 ${barButton}`}>
              <Svg w={16} h={4} stroke="none">
                <circle cx="2" cy="2" r="1.500" fill="#ddd" />
                <circle cx="8" cy="2" r="1.500" fill="#ddd" />
                <circle cx="14" cy="2" r="1.500" fill="#ddd" />
              </Svg>
            </button>
          </div>
          <time className="mt-1 leading-4">Thu 3/19/2026 5:42 AM</time>
        </div>
      </div>
      <button type="button" className="mt-[5px] flex items-center gap-1 text-[11px] leading-4 whitespace-nowrap">
        <Svg w={16} h={16} stroke={BLUE} sw={1.200}>
          <circle cx="8" cy="8" r="7.200" />
          <path d="M8 7v5M8 4v1.800" strokeWidth="1.800" />
        </Svg>
        Click here to download pictures. To help protect your privacy, Outlook prevented automatic download of some pictures in this message.
      </button>
    </div>
  )
}

function MailBody() {
  return (
    <article className="flex min-w-0 flex-1 flex-col items-center overflow-hidden pt-[25px] pl-1">
      <div className="flex h-8 w-[211px] shrink-0 gap-2 overflow-hidden border border-[#c8c8c8] py-[6px] pl-[6px] text-[10px] leading-3 text-[#050505]">
        <span className="flex h-[15px] w-[13px] shrink-0 items-center justify-center bg-white text-xs font-bold text-red-600">×</span>
        <span className="h-[18px] w-[165px] overflow-hidden">Right-click or tap and hold here to download pictures. To help protect</span>
      </div>
      <div className="mt-10 w-[512px] shrink-0 font-['Liberation_Sans',sans-serif] text-sm leading-[17px] whitespace-nowrap text-[#c5c3e3]">
        <p>Hi Mark</p>
        <p className="mt-[18px]">Just a quick one before we go live…</p>
        <p className="mt-[18px]">
          I’m hosting a free masterclass today at 5pm (UK) on:
          <br />
          <b>'How to Create a Passive Income Stream in Your Business'</b>
        </p>
        <p className="mt-[25px]">And this is your <b>final call to join me.</b></p>
        <p className="mt-[25px]">
          If your business currently relies on you showing up to make money then this session
          <br />
          will walk you through how to start changing that.
        </p>
        <p className="mt-[25px]">We’ll be covering:</p>
        <ul className="list-disc pl-10">
          <li className="pl-2">How to turn your expertise into a digital product you can sell on repeat</li>
          <li className="pl-2">The simplest way to validate your idea before building anything</li>
          <li className="pl-2">A clear, practical roadmap to start creating scalable income</li>
        </ul>
        <p>
          Plus, I’ll be sharing my <b>From Idea to Income Workbook</b> so you can follow along and
          <br />
          actually map this out as we go.
        </p>
        <p className="mt-[25px]">
          No complicated tech.
          <br />
          No huge audience needed.
          <br />
          No overwhelm.
        </p>
        <p className="mt-[25px]">Just a simple, practical way to start building income beyond 1:1 work.</p>
        <p className="mt-[25px]">We are kicking off at 5pm (UK) and I’d love to see you there.</p>
        <p className="mt-7 flex items-center gap-2">
          <Svg w={16} h={10} stroke="none">
            <path d="M1 5l5-3.500 3 .5h6c1.500 0 1.500 2 0 2h-5v4c0 1-1 2-2 2H3l-2-.5z" fill="#fcc21b" />
            <path d="M7 5.500h3M7 7.500h3" stroke="#b97700" />
          </Svg>
          <a href="#spot" className="font-bold underline">Save your spot here</a>
        </p>
        <p className="mt-[25px]">Warmest regards</p>
        <p className="mt-[18px]">
          Karen
          <br />
          <i>Passive Income Mentor</i>
        </p>
      </div>
    </article>
  )
}

function ReadingPane() {
  return (
    <main className="mt-[14px] flex min-w-0 flex-1 flex-col border-l border-[#666] pt-2">
      <MailHeader />
      <div className="mt-[5px] flex min-h-0 flex-1 pr-[6px]">
        <MailBody />
        <div className="flex w-[17px] flex-col items-center rounded-full bg-[#141414] py-[5px]">
          <Svg w={9} h={7} stroke="none"><path d="M4.500 0L9 7H0z" fill="#aaa" /></Svg>
          <div className="mt-[5px] h-[72%] w-[9px] rounded-full bg-[#9a9a9a]" />
          <span className="mt-auto">
            <Svg w={9} h={7} stroke="none"><path d="M4.500 7L9 0H0z" fill="#aaa" /></Svg>
          </span>
        </div>
      </div>
    </main>
  )
}

/* ─── Status bar ─────────────────────────────────────────────── */
function StatusBar() {
  return (
    <footer className="flex h-[23px] shrink-0 items-center border-t border-[#444] bg-[#141414] pr-2 pb-px pl-3 text-[10px] font-semibold">
      <span>Items: 16930</span>
      <span className="ml-[18px]">Unread: 50</span>
      <span className="ml-auto">All folders are up to date.</span>
      <span className="ml-5">Connected to: Microsoft Exchange</span>
      <button type="button" aria-label="Normal view" className="ml-[18px] flex h-full w-10 items-center justify-center bg-[#262626]">
        <Svg w={14} h={12} stroke="#fff"><path d="M.5 .5h13v11H.5zM.5 3h13M3.500 3v8M10.500 3v8" /></Svg>
      </button>
      <button type="button" aria-label="Reading view" className="flex h-full w-10 items-center justify-center">
        <Svg w={13} h={12} stroke="#fff">
          <path d="M.5 .5h5l1 1 1-1h5v10h-5l-1 1-1-1h-5zM6.500 1v10M2 3h3M2 5.500h3M2 8h3M8 3h3M8 5.500h3M8 8h3" />
        </Svg>
      </button>
      <button type="button" aria-label="Zoom out" className="ml-[6px]">
        <Svg w={8} h={8} stroke="#fff"><path d="M0 4.500h8" /></Svg>
      </button>
      <input
        type="range"
        aria-label="Zoom"
        defaultValue={50}
        className="mx-[5px] h-3 w-[100px] appearance-none bg-[linear-gradient(#aaa,#aaa)] bg-[length:100%_1px] bg-center bg-no-repeat [&::-webkit-slider-thumb]:h-3 [&::-webkit-slider-thumb]:w-[5px] [&::-webkit-slider-thumb]:appearance-none [&::-webkit-slider-thumb]:bg-[#b4b4b4]"
      />
      <button type="button" aria-label="Zoom in">
        <Svg w={8} h={8} stroke="#fff"><path d="M0 4.500h8M4.500 0v8" /></Svg>
      </button>
      <span className="w-10 text-right text-[11px] font-normal">100%</span>
    </footer>
  )
}

/* ─── Speech bubble that points at the switch ────────────────── */
function Callout() {
  return (
    <div className="pointer-events-none absolute top-[82px] right-[164px] z-20 h-[184px] w-[560px]">
      <svg width="560" height="184" viewBox="0 0 560 184" className="drop-shadow-[0_3px_3px_rgba(0,0,0,0.6)]" aria-hidden>
        <path d="M62 84H346Q360 84 373 91L559 1 394 127Q395 182 333 182H62Q2 182 2 133T62 84z" fill="#fff" />
      </svg>
      <p className="absolute top-[118px] left-[2px] w-[392px] text-center text-lg leading-7 text-[#14204f]">Turn off the New Outlook</p>
    </div>
  )
}

export default function App() {
  return (
    <div className="relative flex h-screen min-w-[1500px] flex-col overflow-hidden bg-[#0a0a0a] font-['Open_Sans','Noto_Sans',sans-serif] text-white">
      <TitleBar />
      <div className="flex min-h-0 flex-1">
        <Rail />
        <div className="flex min-w-0 flex-1 flex-col pr-2">
          <TabBar />
          <Ribbon />
          <div className="mt-[6px] flex min-h-0 flex-1 rounded-t-lg border border-b-0 border-[#666] bg-[#262626]">
            <FolderPane />
            <MessageList />
            <ReadingPane />
          </div>
        </div>
      </div>
      <StatusBar />
      <Callout />
    </div>
  )
}
